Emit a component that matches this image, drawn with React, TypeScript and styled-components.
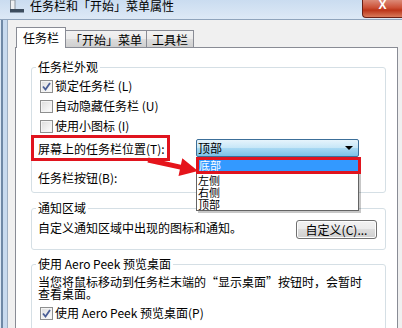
import styled, { createGlobalStyle } from "styled-components";

const GlobalStyle = createGlobalStyle`
  html, body {
    margin: 0;
    padding: 0;
  }
  body {
    width: 402px;
    height: 328px;
    overflow: hidden;
    font-family: "Noto Sans CJK SC", "Liberation Sans", sans-serif;
    font-size: 12px;
    color: #000;
  }
`;

const Window = styled.div`
  position: relative;
  width: 402px;
  height: 328px;
  display: flex;
  flex-direction: column;
  overflow: hidden;
  background: #f0f0f0;
`;

const TitleBar = styled.div`
  height: 20px;
  box-sizing: border-box;
  display: flex;
  align-items: flex-start;
  background: linear-gradient(#cadcf0, #dde9f6);
  border-bottom: 1px solid #8fa4bc;
`;

const TitleIcon = styled.svg`
  margin-left: 10px;
  width: 14px;
  height: 13px;
  flex: none;
`;

const TitleText = styled.div`
  margin-left: 6px;
  line-height: 12px;
  font-size: 12px;
`;

const CloseButton = styled.div`
  margin-left: auto;
  width: 40px;
  height: 18px;
  box-sizing: border-box;
  border: 1px solid #6a2016;
  border-top: none;
  border-right: none;
  border-bottom-left-radius: 4px;
  background: linear-gradient(#dc8a78, #cc5036 45%, #bb3519 60%, #d97a5b);
  color: #fff;
  display: flex;
  justify-content: center;
  font: bold 12px "Liberation Sans", sans-serif;
  line-height: 10px;
`;

const Body = styled.div`
  flex: 1;
  display: flex;
  min-height: 0;
`;

const LeftFrame = styled.div`
  width: 8px;
  flex: none;
  background: linear-gradient(
    to right,
    #dbe7f4 0 1px,
    #6f88a5 1px 3px,
    #c8daee 3px 7px,
    #9eafc2 7px 8px
  );
`;

const Client = styled.div`
  flex: 1;
  display: flex;
  flex-direction: column;
  padding: 7px 4px 0 7px;
  min-width: 0;
`;

const TabStrip = styled.div`
  display: flex;
  align-items: flex-end;
  height: 20px;
  padding-left: 1px;
`;

const Tab = styled.div<{ $active?: boolean; $w: number }>`
  position: relative;
  z-index: ${(p) => (p.$active ? 1 : 0)};
  width: ${(p) => p.$w}px;
  height: ${(p) => (p.$active ? 21 : 17)}px;
  margin-bottom: ${(p) => (p.$active ? -1 : 0)}px;
  margin-left: ${(p) => (p.$active ? 0 : -1)}px;
  box-sizing: border-box;
  border: 1px solid #898c95;
  border-bottom: none;
  background: ${(p) =>
    p.$active ? "#fff" : "linear-gradient(#f2f2f2, #ebebeb 50%, #dddddd 50%, #cfcfcf)"};
  display: flex;
  justify-content: center;
  align-items: center;
  padding-top: ${(p) => (p.$active ? 0 : 2)}px;
  font-size: 12px;
  line-height: 12px;
`;

const Panel = styled.div`
  flex: 1;
  display: flex;
  flex-direction: column;
  background: #fff;
  border: 1px solid #898c95;
  border-bottom: none;
  padding: 13px 11px 0 15px;
`;

const Group = styled.fieldset<{ $gap?: number }>`
  margin: ${(p) => p.$gap ?? 0}px 0 0 0;
  padding: 3px 0 0 6px;
  border: 1px solid #d5dfe5;
  border-radius: 3px;
  min-width: 0;
`;

const Legend = styled.legend`
  padding: 0 2px;
  margin-left: -2px;
  line-height: 12px;
  font-size: 12px;
`;

const CheckRow = styled.div<{ $h?: number }>`
  display: flex;
  align-items: center;
  height: ${(p) => p.$h ?? 20}px;
  line-height: 12px;
`;

const Box = styled.span`
  width: 13px;
  height: 13px;
  box-sizing: border-box;
  margin: 0 2px 0 2px;
  border: 1px solid #8e8f8f;
  background: linear-gradient(135deg, #dcdcdc, #ffffff);
  box-shadow: inset 0 0 0 1px #f4f4f4;
  display: flex;
  align-items: center;
  justify-content: center;
  flex: none;
`;

function Checkbox({ checked }: { checked?: boolean }) {
  return (
    <Box>
      {checked && (
        <svg width="9" height="9" viewBox="0 0 9 9">
          <path d="M1 4.5 L3.5 7.5 L8 1" fill="none" stroke="#4a5e96" strokeWidth="1.8" />
        </svg>
      )}
    </Box>
  );
}

const PositionRow = styled.div`
  display: grid;
  grid-template-columns: 158px 163px;
  align-items: start;
  height: 28px;
`;

const Marked = styled.span`
  justify-self: start;
  margin-left: -7px;
  margin-top: -1px;
  padding: 5px 2px 3px 4px;
  border: 3px solid #e0141e;
  line-height: 12px;
`;

const ComboWrap = styled.div`
  position: relative;
  margin-top: 3px;
  z-index: 2;
`;

const Combo = styled.div`
  height: 18px;
  box-sizing: border-box;
  border: 1px solid #3c6f99;
  border-radius: 2px;
  background: linear-gradient(#e6f4fc, #c5e6f7 50%, #a9d9f3 50%, #7dc2e6);
  display: flex;
  align-items: center;
  justify-content: space-between;
  padding: 0 5px 0 1px;
  line-height: 12px;
`;

const Caret = styled.span`
  width: 0;
  height: 0;
  border-left: 4px solid transparent;
  border-right: 4px solid transparent;
  border-top: 4px solid #000;
`;

const DropList = styled.div`
  position: absolute;
  top: 100%;
  left: 0;
  width: 163px;
  box-sizing: border-box;
  background: #fff;
  border: 1px solid #646464;
  box-shadow: 2px 2px 0 rgba(0, 0, 0, 0.22);
`;

const Item = styled.div<{ $selected?: boolean }>`
  font-size: 11px;
  line-height: 12px;
  height: 12px;
  padding-left: 1px;
  ${(p) =>
    p.$selected &&
    `
    height: 11px;
    line-height: 11px;
    margin: -1px -3px 0 -1px;
    padding-left: 0;
    border: 3px solid #e0141e;
    background: #3399ff;
    color: #fff;
  `}
`;

const PlainRow = styled.div`
  display: flex;
  align-items: center;
  height: 28px;
  line-height: 12px;
`;

const NotifyRow = styled.div`
  display: flex;
  justify-content: space-between;
  align-items: flex-start;
  padding: 3px 8px 10px 0;
`;

const NotifyText = styled.span`
  line-height: 14px;
  margin-top: 1px;
`;

const Button = styled.div`
  width: 81px;
  height: 19px;
  box-sizing: border-box;
  border: 1px solid #707070;
  border-radius: 3px;
  background: linear-gradient(#f2f2f2, #ebebeb 50%, #dddddd 50%, #cfcfcf);
  box-shadow: inset 0 0 0 1px #fcfcfc;
  display: flex;
  align-items: center;
  justify-content: center;
  line-height: 12px;
`;

const Desc = styled.div`
  padding-top: 3px;
  line-height: 12px;
  max-width: 330px;
`;

const PeekRow = styled(CheckRow)`
  margin-top: 3px;
  padding-bottom: 20px;
`;

const Arrow = styled.svg`
  position: absolute;
  left: 140px;
  top: 152px;
  width: 62px;
  height: 32px;
  z-index: 3;
`;

export default function App() {
  return (
    <>
      <GlobalStyle />
      <Window>
        <TitleBar>
          <TitleIcon viewBox="0 0 14 13">
            <rect x="0.5" y="0" width="4.5" height="10" fill="#eef0f2" stroke="#8a939c" strokeWidth="1" />
            <rect x="0" y="9" width="14" height="3.5" fill="#3d4d5e" />
          </TitleIcon>
          <TitleText>任务栏和「开始」菜单属性</TitleText>
          <CloseButton>X</CloseButton>
        </TitleBar>
        <Body>
          <LeftFrame />
          <Client>
            <TabStrip>
              <Tab $active $w={50}>任务栏</Tab>
              <Tab $w={82}>「开始」菜单</Tab>
              <Tab $w={48}>工具栏</Tab>
            </TabStrip>
            <Panel>
              <Group>
                <Legend>任务栏外观</Legend>
                <CheckRow>
                  <Checkbox checked />
                  锁定任务栏 (L)
                </CheckRow>
                <CheckRow>
                  <Checkbox />
                  自动隐藏任务栏 (U)
                </CheckRow>
                <CheckRow>
                  <Checkbox />
                  使用小图标 (I)
                </CheckRow>
                <PositionRow>
                  <Marked>屏幕上的任务栏位置(T):</Marked>
                  <ComboWrap>
                    <Combo>
                      顶部
                      <Caret />
                    </Combo>
                    <DropList>
                      <Item $selected>底部</Item>
                      <Item>左侧</Item>
                      <Item>右侧</Item>
                      <Item>顶部</Item>
                    </DropList>
                  </ComboWrap>
                </PositionRow>
                <PlainRow>任务栏按钮(B):</PlainRow>
              </Group>
              <Group $gap={9}>
                <Legend>通知区域</Legend>
                <NotifyRow>
                  <NotifyText>自定义通知区域中出现的图标和通知。</NotifyText>
                  <Button>自定义(C)...</Button>
                </NotifyRow>
              </Group>
              <Group $gap={8}>
                <Legend>使用 Aero Peek 预览桌面</Legend>
                <Desc>当您将鼠标移动到任务栏末端的“显示桌面”按钮时，会暂时查看桌面。</Desc>
                <PeekRow>
                  <Checkbox checked />
                  使用 Aero Peek 预览桌面(P)
                </PeekRow>
              </Group>
            </Panel>
          </Client>
        </Body>
        <Arrow viewBox="0 0 62 32">
          <polygon
            points="8.5,5.6 40.9,12.7 42.3,6.3 58,19 38.5,23.9 39.9,17.5 7.5,10.4"
            fill="#e5141b"
          />
        </Arrow>
      </Window>
    </>
  );
}
